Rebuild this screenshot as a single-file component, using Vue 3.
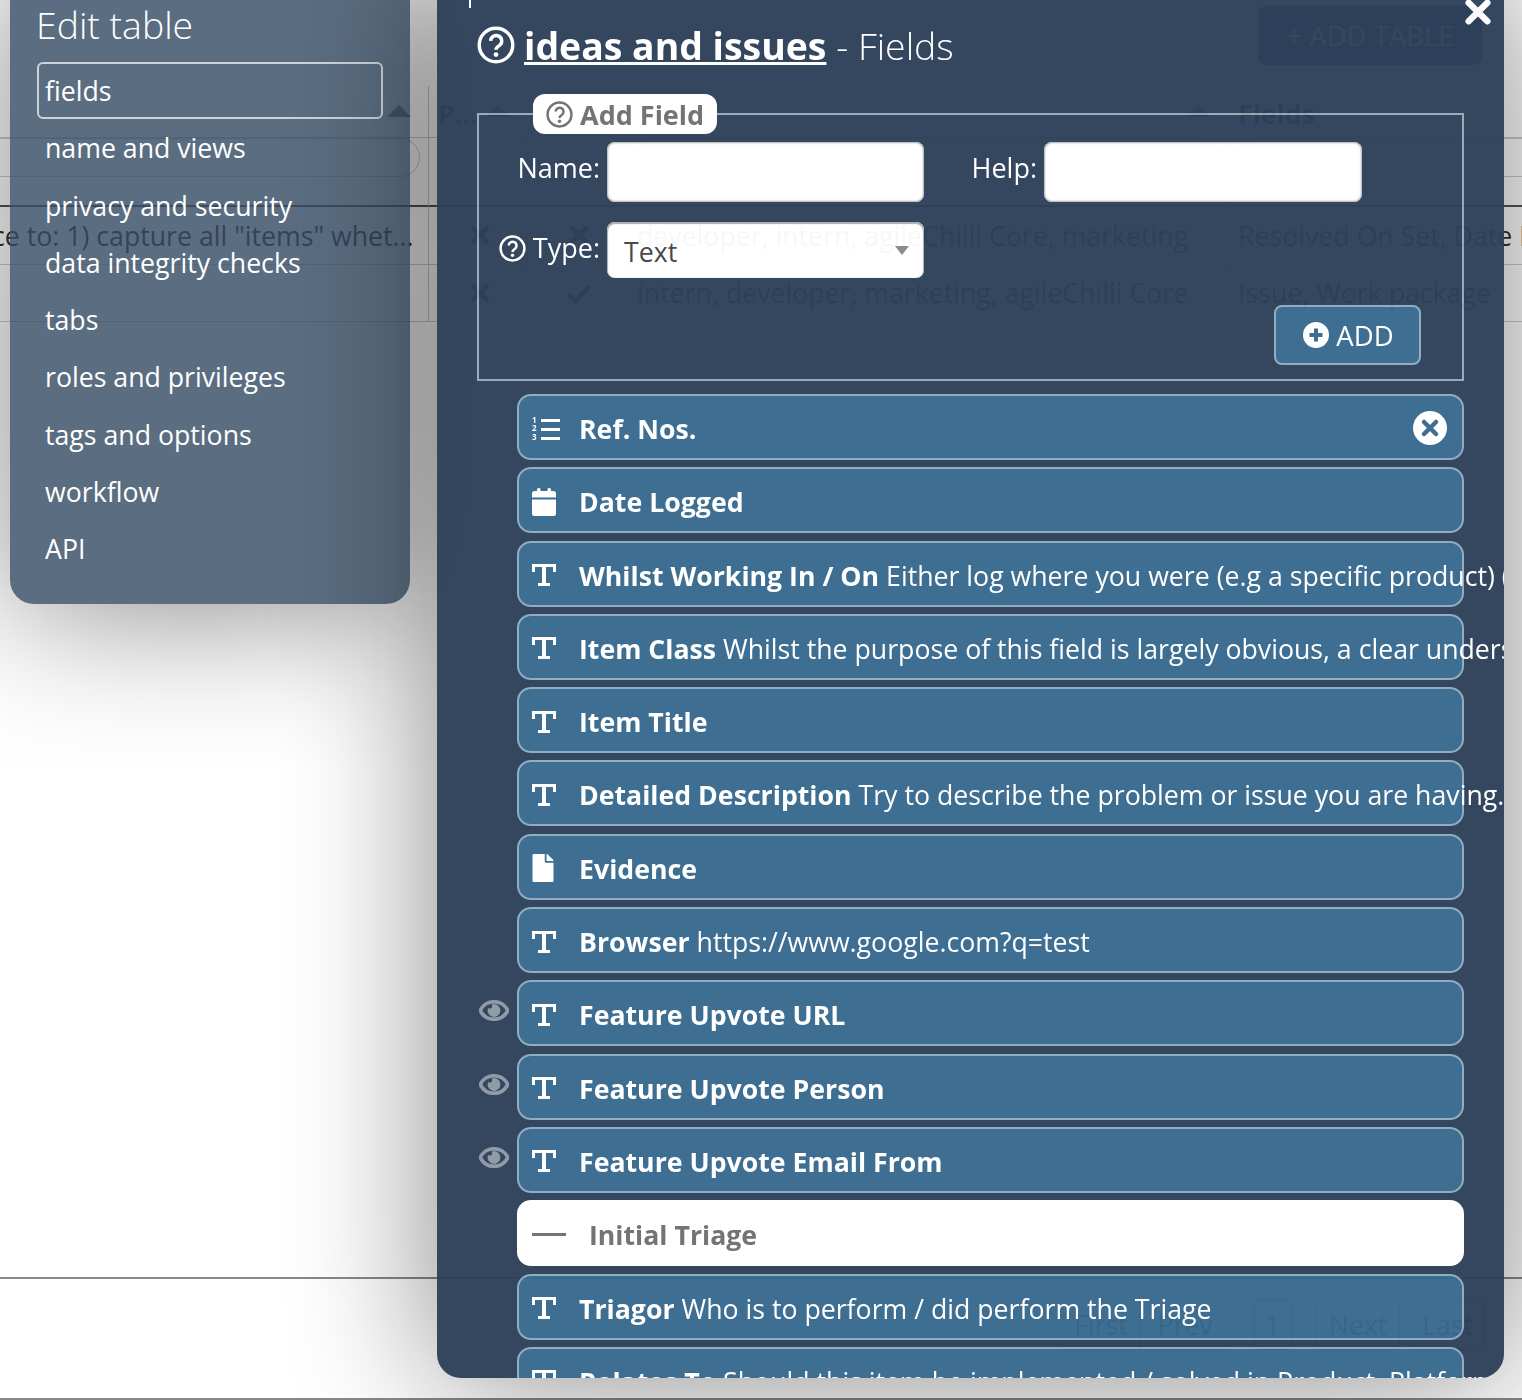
<script setup>
const rows = [
  { icon: 'list', name: 'Ref. Nos.', remove: true },
  { icon: 'date', name: 'Date Logged' },
  { icon: 'text', name: 'Whilst Working In / On', help: 'Either log where you were (e.g a specific product) (or anything else useful)' },
  { icon: 'text', name: 'Item Class', help: 'Whilst the purpose of this field is largely obvious, a clear understanding helps' },
  { icon: 'text', name: 'Item Title' },
  { icon: 'text', name: 'Detailed Description', help: 'Try to describe the problem or issue you are having.' },
  { icon: 'file', name: 'Evidence' },
  { icon: 'text', name: 'Browser', help: 'https://www.google.com?q=test' },
  { icon: 'text', name: 'Feature Upvote URL', hidden: true },
  { icon: 'text', name: 'Feature Upvote Person', hidden: true },
  { icon: 'text', name: 'Feature Upvote Email From', hidden: true },
  { icon: 'line', name: 'Initial Triage', section: true },
  { icon: 'text', name: 'Triagor', help: 'Who is to perform / did perform the Triage' },
  { icon: 'text', name: 'Relates To', help: 'Should this item be implemented / solved in Product, Platform or Both' }
]

const menu = ['fields', 'name and views', 'privacy and security', 'data integrity checks', 'tabs', 'roles and privileges', 'tags and options', 'workflow', 'API']
const pages = [
  { label: 'First', cls: 'p-first' },
  { label: 'Prev', cls: 'p-prev' },
  { label: '1', cls: 'p-current' },
  { label: 'Next', cls: 'p-next' },
  { label: 'Last', cls: 'p-last' }
]
</script>

<template>
  <div class="page">
    <!-- the list page behind the two dialogs -->
    <div class="behind">
      <div class="toolbar">
        <span class="add-table">+ ADD TABLE</span>
      </div>
      <div class="table">
        <div class="cell head"><i class="sort"></i></div>
        <div class="cell head"><b>P...</b><i class="sort"></i></div>
        <div class="cell head"></div>
        <div class="cell head end"><i class="sort"></i></div>
        <div class="cell head"><b>Fields</b></div>

        <div class="cell filter thick"><span class="pill first"></span></div>
        <div class="cell filter thick"></div>
        <div class="cell filter thick"></div>
        <div class="cell filter thick"><span class="pill"></span></div>
        <div class="cell filter thick"><span class="pill open"></span></div>

        <div class="cell row-cell"><span class="desc">ce to: 1) capture all "items" whet...</span></div>
        <div class="cell row-cell mark">
          <svg viewBox="0 0 24 24" width="28" height="28"><path d="M5 5l14 14M19 5L5 19" class="ghost-stroke" /></svg>
        </div>
        <div class="cell row-cell mark">
          <svg viewBox="0 0 24 24" width="28" height="28"><path d="M5 5l14 14M19 5L5 19" class="ghost-stroke" /></svg>
        </div>
        <div class="cell row-cell">developer, intern, agileChilli Core, marketing</div>
        <div class="cell row-cell">Resolved On Set, Date Logged</div>

        <div class="cell row-cell"></div>
        <div class="cell row-cell mark">
          <svg viewBox="0 0 24 24" width="28" height="28"><path d="M5 5l14 14M19 5L5 19" class="ghost-stroke" /></svg>
        </div>
        <div class="cell row-cell mark">
          <svg viewBox="0 0 24 24" width="28" height="28"><path d="M3 13l6 6L21 6" class="ghost-stroke" /></svg>
        </div>
        <div class="cell row-cell">intern, developer, marketing, agileChilli Core</div>
        <div class="cell row-cell">Issue, Work package</div>
      </div>
      <div class="pager">
        <span v-for="p in pages" :key="p.label" class="page-btn" :class="p.cls">{{ p.label }}</span>
      </div>
      <div class="footer-line"></div>
    </div>

    <!-- left dialog -->
    <aside class="side">
      <h2>Edit table</h2>
      <ul>
        <li v-for="(m, i) in menu" :key="m" :class="{ active: i === 0 }">{{ m }}</li>
      </ul>
    </aside>

    <!-- fields dialog -->
    <section class="modal">
      <i class="tick"></i>
      <svg class="close" viewBox="0 0 24 24"><path d="M4 4l16 16M20 4L4 20" /></svg>

      <h1 class="title">
        <svg class="help big" viewBox="0 0 24 24">
          <circle cx="12" cy="12" r="10.600" />
          <path d="M8.600 9.400a3.500 3.500 0 1 1 5.400 3c-1.300.8-2 1.400-2 2.600" />
          <circle class="dot" cx="12" cy="18" r="1.500" />
        </svg>
        <span class="title-name">ideas and issues</span>
        <span class="title-rest"> - Fields</span>
      </h1>

      <fieldset class="add-form">
        <legend>
          <svg class="help" viewBox="0 0 24 24">
            <circle cx="12" cy="12" r="10.600" />
            <path d="M8.600 9.400a3.500 3.500 0 1 1 5.400 3c-1.300.8-2 1.400-2 2.600" />
            <circle class="dot" cx="12" cy="18" r="1.500" />
          </svg>
          Add Field
        </legend>
        <div class="form-grid">
          <label>Name:</label>
          <input type="text" />
          <label>Help:</label>
          <input type="text" />
          <label class="type-label">
            <svg class="help" viewBox="0 0 24 24">
              <circle cx="12" cy="12" r="10.600" />
              <path d="M8.600 9.400a3.500 3.500 0 1 1 5.400 3c-1.300.8-2 1.400-2 2.600" />
              <circle class="dot" cx="12" cy="18" r="1.500" />
            </svg>
            Type:
          </label>
          <div class="select">Text<i class="caret"></i></div>
        </div>
        <div class="form-actions">
          <button type="button" class="add-btn">
            <svg viewBox="0 0 26 26" width="26" height="26">
              <circle cx="13" cy="13" r="13" fill="#fff" />
              <path d="M13 6.500v13M6.500 13h13" stroke="#37698d" stroke-width="4" />
            </svg>
            ADD
          </button>
        </div>
      </fieldset>

      <ul class="field-list">
        <li v-for="r in rows" :key="r.name">
          <span class="eye-slot">
            <svg v-if="r.hidden" viewBox="0 0 576 512" width="30" height="27">
              <path d="M288 144a110.940 110.940 0 0 0-31.240 5 55.400 55.400 0 0 1 7.240 27 56 56 0 0 1-56 56 55.400 55.400 0 0 1-27-7.240A111.710 111.710 0 1 0 288 144zm284.520 97.400C518.290 135.590 410.930 64 288 64S57.680 135.640 3.480 241.410a32.350 32.350 0 0 0 0 29.190C57.710 376.410 165.070 448 288 448s230.320-71.640 284.520-177.410a32.350 32.350 0 0 0 0-29.190zM288 400c-98.650 0-189.090-55-237.930-144C98.910 167 189.340 112 288 112s189.090 55 237.930 144C477.100 345 386.660 400 288 400z" />
            </svg>
          </span>
          <div class="field" :class="{ section: r.section }">
            <span class="field-icon" :class="{ wide: r.section }">
              <svg v-if="r.icon === 'text'" viewBox="0 0 24 24" width="24" height="24">
                <rect x="0" y="1" width="24" height="3" />
                <rect x="0" y="1" width="3" height="8" />
                <rect x="21" y="1" width="3" height="8" />
                <rect x="10" y="1" width="4" height="21" />
                <rect x="6" y="20" width="12" height="3" />
              </svg>
              <svg v-else-if="r.icon === 'list'" viewBox="0 0 28 26" width="28" height="26">
                <text x="0" y="7" class="tiny">1</text>
                <text x="0" y="15" class="tiny">2</text>
                <text x="0" y="24" class="tiny">3</text>
                <rect x="9" y="3" width="19" height="3" />
                <rect x="9" y="12" width="19" height="3" />
                <rect x="9" y="21" width="19" height="3" />
              </svg>
              <svg v-else-if="r.icon === 'date'" viewBox="0 0 24 28" width="24" height="28">
                <rect x="5" y="0" width="3.500" height="6" rx="1.500" />
                <rect x="15.500" y="0" width="3.500" height="6" rx="1.500" />
                <path d="M2.500 3H21.500A2.500 2.500 0 0 1 24 5.500V9.500H0V5.500A2.500 2.500 0 0 1 2.500 3zM0 11.500h24V25.500a2.500 2.500 0 0 1-2.500 2.500h-19A2.500 2.500 0 0 1 0 25.500z" />
              </svg>
              <svg v-else-if="r.icon === 'file'" viewBox="0 0 384 512" width="22" height="28">
                <path d="M224 136V0H24C10.700 0 0 10.700 0 24v464c0 13.300 10.700 24 24 24h336c13.300 0 24-10.700 24-24V160H248c-13.200 0-24-10.800-24-24zm160-14.100v6.100H256V0h6.100c6.400 0 12.500 2.500 17 7l97.900 98c4.500 4.500 7 10.600 7 16.900z" />
              </svg>
              <svg v-else viewBox="0 0 34 4" width="34" height="4">
                <rect width="34" height="3" />
              </svg>
            </span>
            <span class="field-text"><b>{{ r.name }}</b><span v-if="r.help">{{ ' ' + r.help }}</span></span>
            <svg v-if="r.remove" class="remove" viewBox="0 0 34 34">
              <circle cx="17" cy="17" r="17" fill="#fff" />
              <path d="M11 11l12 12M23 11L11 23" stroke="#37698d" stroke-width="4.500" stroke-linecap="round" />
            </svg>
          </div>
        </li>
      </ul>
    </section>
  </div>
</template>

<style>
html,
body {
  margin: 0;
  background: #fff;
}
</style>

<style scoped>
.page {
  position: relative;
  width: 1522px;
  height: 1400px;
  overflow: hidden;
  font-family: "Open Sans", "Liberation Sans", sans-serif;
  background: #fff;
}

/* page behind */
.behind {
  color: #333;
  font-size: 26.700px;
}

.toolbar {
  display: flex;
  justify-content: flex-end;
  padding: 6px 40px 0 0;
}

.add-table {
  display: block;
  width: 224px;
  height: 59px;
  line-height: 59px;
  text-align: center;
  border-radius: 8px;
  background: #37475f;
  color: #fff;
  font-size: 27.500px;
}

.table {
  display: grid;
  grid-template-columns: 429px 99px 100px 601px 293px;
  grid-template-rows: 52px 69px 57.500px 57.500px;
  margin-top: 21px;
}

.cell {
  display: flex;
  align-items: center;
  border-bottom: 1px solid #ccc;
  border-right: 1px solid #ccc;
  padding-left: 9px;
  white-space: nowrap;
  overflow: hidden;
  position: relative;
  box-sizing: border-box;
}

.cell:nth-child(5n) {
  border-right: 0;
}

.head {
  justify-content: space-between;
  padding-top: 4px;
  padding-right: 17px;
}

.head b {
  font-weight: 700;
}

.head:first-child {
  justify-content: flex-end;
}

.head.end {
  justify-content: flex-end;
}

.sort {
  display: block;
  width: 0;
  height: 0;
  margin-top: -6px;
  border-left: 12px solid transparent;
  border-right: 12px solid transparent;
  border-bottom: 12px solid #777;
}

.filter {
  align-items: flex-start;
}

.thick {
  border-bottom: 2px solid #555;
}

.pill {
  display: block;
  height: 39px;
  width: 100%;
  margin-right: 10px;
  box-sizing: border-box;
  border: 1px solid #ccc;
  border-radius: 20px;
}

.pill.first {
  margin-left: -40px;
  flex: 0 0 451px;
  width: 451px;
}

.pill.open {
  flex: 0 0 400px;
  width: 400px;
}

.desc {
  margin-left: -17px;
}

.mark {
  padding-left: 37px;
}

.ghost-stroke {
  fill: none;
  stroke: #333;
  stroke-width: 4;
}

.pager {
  display: flex;
  justify-content: flex-end;
  padding: 21px 37px 0 0;
  margin-top: 955px;
  border-top: 2px solid #888;
}

.page-btn {
  display: block;
  box-sizing: border-box;
  height: 50px;
  line-height: 48px;
  border: 1px solid #999;
  text-align: center;
}

.p-first {
  width: 78px;
}

.p-prev {
  width: 90px;
}

.p-current {
  width: 38px;
  margin: 0 24px;
  border-color: #444;
  border-radius: 6px;
}

.p-next {
  width: 84px;
  margin-right: 10px;
}

.p-last {
  width: 75px;
}

.footer-line {
  margin-top: 48px;
  border-top: 2px solid #888;
}

/* left dialog */
.side {
  position: absolute;
  left: 10px;
  top: -30px;
  width: 400px;
  height: 634px;
  box-sizing: border-box;
  padding: 29px 27px 0;
  border-radius: 24px;
  background: rgba(50, 72, 98, 0.8);
  box-shadow: 0 0 150px rgba(0, 0, 0, 0.5);
  color: #fff;
}

.side h2 {
  margin: 0 0 11px -1px;
  font-size: 37.400px;
  font-weight: 300;
  line-height: 52px;
}

.side ul,
.field-list {
  list-style: none;
  margin: 0;
  padding: 0;
}

.side li {
  box-sizing: border-box;
  height: 57.250px;
  line-height: 57.250px;
  padding-left: 8px;
  font-size: 26.700px;
}

.side li.active {
  width: 346px;
  border: 2px solid #ccd3da;
  border-radius: 6px;
  padding-left: 6px;
  line-height: 53px;
}

/* fields dialog */
.modal {
  position: absolute;
  left: 437px;
  top: -30px;
  width: 1067px;
  height: 1408px;
  box-sizing: border-box;
  padding: 52px 40px 0;
  border-radius: 24px;
  overflow: hidden;
  background: #2e415a;
  opacity: 0.965;
  color: #fff;
  box-shadow: 0 0 150px rgba(0, 0, 0, 0.5);
}

.tick {
  position: absolute;
  left: 32px;
  top: 0;
  width: 2px;
  height: 38px;
  background: #fff;
}

.close {
  position: absolute;
  right: 12px;
  top: 28px;
  width: 28px;
  height: 28px;
  fill: none;
  stroke: #fff;
  stroke-width: 5.500;
  stroke-linecap: round;
}

.help {
  width: 27px;
  height: 27px;
  fill: none;
  stroke: currentColor;
  stroke-width: 2.200;
  flex: none;
}

.help .dot {
  fill: currentColor;
  stroke: none;
}

.help.big {
  width: 38px;
  height: 38px;
  margin-right: 9px;
}

.title {
  display: flex;
  align-items: center;
  margin: 0;
  height: 46px;
  font-size: 37.400px;
  font-weight: 300;
  white-space: pre;
}

.title-name {
  font-weight: 700;
  text-decoration: underline;
}

.add-form {
  box-sizing: border-box;
  width: 987px;
  height: 287px;
  margin: 26px 0 0;
  padding: 0;
  border: 2px solid #9aa6b4;
  min-inline-size: 0;
}

.add-form legend {
  display: flex;
  align-items: center;
  gap: 7px;
  box-sizing: border-box;
  height: 40px;
  padding: 0 13px;
  margin-left: 54px;
  border-radius: 12px;
  background: #fff;
  color: #6f6f6f;
  font-size: 27px;
  font-weight: 700;
}

.form-grid {
  display: grid;
  grid-template-columns: 121px 317px 106px 318px;
  column-gap: 7px;
  row-gap: 20px;
  align-items: start;
  padding-top: 8px;
  font-size: 27px;
}

.form-grid label {
  display: flex;
  justify-content: flex-end;
  align-items: center;
  gap: 7px;
  height: 52px;
  line-height: 52px;
}

.form-grid input {
  box-sizing: border-box;
  width: 100%;
  height: 60px;
  border: 0;
  border-radius: 8px;
  background: #fff;
  box-shadow: inset 0 0 2px 1px #aaa;
}

.select {
  position: relative;
  box-sizing: border-box;
  height: 56px;
  line-height: 60px;
  padding-left: 17px;
  border-radius: 8px;
  background: #fff;
  color: #444;
  font-size: 26.700px;
  box-shadow: inset 0 1px 1px 1px #aaa;
}

.caret {
  position: absolute;
  right: 15px;
  top: 24px;
  border-left: 7px solid transparent;
  border-right: 7px solid transparent;
  border-top: 9px solid #888;
}

.form-actions {
  display: flex;
  justify-content: flex-end;
  padding: 27px 41px 0 0;
}

.add-btn {
  display: flex;
  align-items: center;
  justify-content: center;
  gap: 7px;
  box-sizing: border-box;
  width: 147px;
  height: 60px;
  padding: 0 0 0 2px;
  border: 2px solid #8daabf;
  border-radius: 8px;
  background: #37698d;
  color: #fff;
  font-family: inherit;
  font-size: 27.500px;
}

.field-list {
  margin-top: 13px;
}

.field-list li {
  display: flex;
  margin-bottom: 7.300px;
}

.eye-slot {
  flex: 0 0 40px;
  fill: #8d99a6;
  stroke: #8d99a6;
  stroke-width: 22;
  padding-top: 17px;
}

.eye-slot svg {
  display: block;
  margin-left: 2px;
}

.field {
  position: relative;
  display: flex;
  align-items: center;
  box-sizing: border-box;
  width: 947px;
  height: 66px;
  padding: 3px 0 0 13px;
  border: 2px solid #8daabf;
  border-radius: 14px;
  background: #37698d;
  color: #fff;
  fill: #fff;
  font-size: 26.700px;
  white-space: nowrap;
}

.field.section {
  border-color: #fff;
  background: #fff;
  color: #6f6f6f;
  fill: #6f6f6f;
}

.field-icon {
  display: flex;
  align-items: center;
  flex: 0 0 47px;
}

.field-icon.wide {
  flex-basis: 57px;
}

.tiny {
  font-size: 8px;
  font-weight: 700;
}

.field-text b {
  font-weight: 700;
}

.remove {
  position: absolute;
  right: 15px;
  top: 15px;
  width: 34px;
  height: 34px;
}
</style>
